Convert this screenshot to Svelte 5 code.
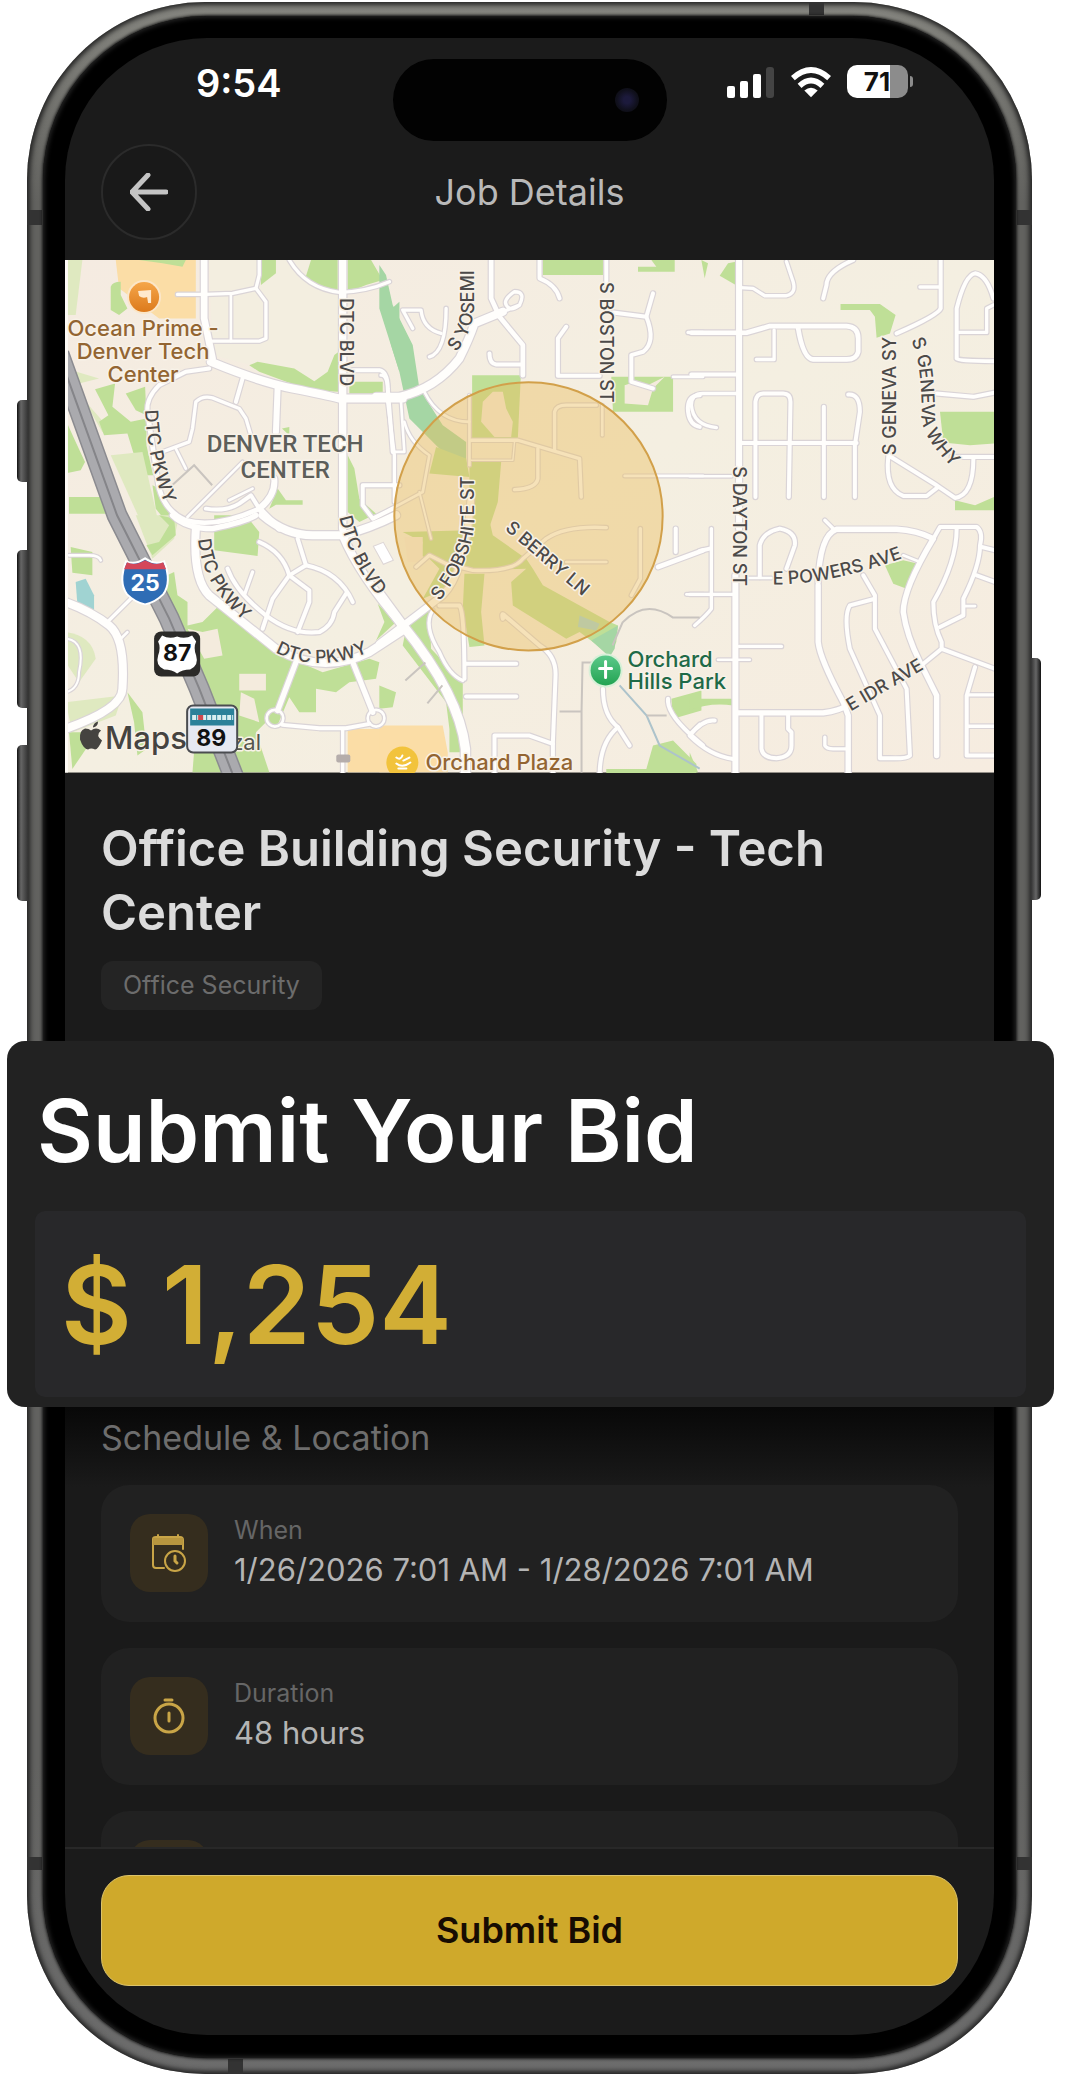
<script>
	let bid = $state('1,254');

	const job = {
		title: 'Office Building Security - Tech Center',
		category: 'Office Security'
	};

	const details = [
		{ icon: 'calendar', label: 'When', value: '1/26/2026 7:01 AM - 1/28/2026 7:01 AM' },
		{ icon: 'timer', label: 'Duration', value: '48 hours' },
		{ icon: 'none', label: '', value: '' }
	];

	const green = '#bfdf97';
	const pale = '#dfe9c0';
	const sand = '#f4ebdd';
	const orange = '#fbdda6';
	const teal = '#a5d6a4';
	const water = '#a0d3d2';

	// map tiles, each drawn at three units per pixel
	// areas: [fill, path], roads: [width, path]
	const tiles = [
		{
			x: -6,
			y: -5,
			areas: [
				[pale, 'M18 15H70L50 180H18z'],
				['#f3eee0', 'M450 15H840V400L460 300z'],
				[orange, 'M170 15H410V190H300L180 100z'],
				[green, 'M240 15H380L370 35 310 25z'],
				[green, 'M155 95Q160 80 185 80V120L205 160 180 180 155 165z'],
				[green, 'M605 15H650V55L605 90z'],
				[green, 'M755 15H835V112L775 100 738 70z'],
				[green, 'M865 15H935L970 75 920 90 865 112z'],
				[teal, 'M1020 140L975 180 995 270 1020 350z'],
				[green, 'M570 330L595 320 705 340 765 378 805 350 825 300 838 290V410L750 405 600 350z'],
				[green, 'M870 380H970V415H870z'],
				[pale, 'M20 340L120 370 60 385 80 440 150 520 130 530z'],
				[green, 'M108 402L168 385 160 455 215 500 262 490V570L282 660H258L225 600 205 535 135 540 120 500 148 480z'],
				[green, 'M200 415L258 395 262 480 230 465z'],
				[green, 'M18 490L50 560 78 620 65 645 18 655z'],
				[green, 'M30 725H135L165 775H30z'],
				[pale, 'M155 600L250 590 300 810H250z'],
				[green, 'M280 690L300 700 350 790 330 810 290 760z'],
				[green, 'M668 520L690 515V540z'],
				[green, 'M630 760L655 700 680 735H730V748H650z'],
				[green, 'M865 600L885 640 900 730 950 775 900 800 865 770z']
			],
			roads: [
				[20, 'M435 15V190L460 310'],
				[24, 'M455 320Q600 380 700 400T840 430H1030'],
				[22, 'M850 15V820'],
				[10, 'M690 15Q740 100 840 112Q920 110 990 80'],
				[10, 'M355 118H440L520 115 590 100'],
				[10, 'M600 15V60L590 100 620 140V250L600 258H460'],
				[8, 'M515 120V258'],
				[12, 'M550 370L530 440'],
				[18, 'M655 400L650 530'],
				[12, 'M450 340L380 350 300 390Q260 430 265 470'],
				[14, 'M265 470Q290 640 300 700Q320 770 380 795Q470 820 600 760'],
				[18, 'M645 670Q650 720 600 760L660 820'],
				[8, 'M385 785L550 620'],
				[10, 'M310 590L390 560 400 520 410 440Q430 420 460 428L540 460 560 490 575 540'],
				[8, 'M350 580L380 640'],
				[12, 'M440 760Q500 770 540 745L575 720 600 760'],
				[8, 'M510 735L580 700'],
				[12, 'M880 345H960Q985 350 985 400L1000 590'],
				[12, 'M1020 690H910V750L940 790L1000 760']
			]
		},
		{
			x: 314,
			y: -5,
			areas: [
				[teal, 'M0 30L20 60 40 150 100 270 120 400 190 510 260 560V630L200 600 90 490 60 350 0 160z'],
				[green, 'M170 575L260 610 270 665 150 655z'],
				[green, 'M490 15H670V60H490z'],
				[green, 'M815 15H885V50H775V35H830z'],
				[green, 'M278 360H424L415 548H278z'],
				[sand, 'M310 440L340 410H370L380 460 400 500 395 545H345L305 500z'],
				[green, 'M695 365H880V470H700z'],
				[sand, 'M735 390Q775 375 795 395L855 365 820 400 805 450 735 445z'],
				[green, 'M270 620H365L355 740 330 815H270z']
			],
			roads: [
				[24, 'M-10 425H60Q170 400 240 310Q270 250 285 205L370 170'],
				[10, 'M370 170L420 150Q440 110 405 110Q360 140 390 160Q400 165 420 150'],
				[14, 'M335 15V130L360 185 430 270V360'],
				[12, 'M330 295Q330 325 350 328H430'],
				[12, 'M480 15V70Q530 90 540 130'],
				[12, 'M680 15V90'],
				[12, 'M560 215L535 250V362H660'],
				[12, 'M700 172L800 185 820 115'],
				[12, 'M800 185Q830 260 790 290L755 300V380L820 400'],
				[8, 'M880 365H970'],
				[10, 'M925 232H970'],
				[12, 'M960 420Q920 420 925 470Q930 510 960 515'],
				[10, 'M100 220L70 165H125Q130 220 185 235'],
				[10, 'M200 160Q200 290 150 305'],
				[8, 'M135 410Q180 500 270 500'],
				[8, 'M270 420V630'],
				[10, 'M275 555H415L600 610 605 725'],
				[10, 'M525 585V470Q530 450 560 450H650'],
				[10, 'M475 580V670Q470 700 405 703'],
				[8, 'M668 450V540'],
				[8, 'M735 662H970'],
				[10, 'M5 360Q30 360 25 440L45 600V740'],
				[8, 'M65 440L75 590H45'],
				[8, 'M75 500Q90 560 150 600L130 710 0 780'],
				[8, 'M-20 690H30'],
				[6, 'M120 710L155 850'],
				[4, 'M275 615H400L405 560']
			]
		},
		{
			x: 624,
			y: -5,
			areas: [
				[green, 'M35 15L55 25 45 70z'],
				[green, 'M138 20V90L90 62 115 25z'],
				[green, 'M452 147H570L617 180 600 235 560 248 555 185 540 165H452z'],
				[green, 'M750 470H912V565L840 570 760 562z'],
				[green, 'M795 735L855 750 912 725V765H795z']
			],
			roads: [
				[18, 'M148 15V820'],
				[14, 'M5 233H170L240 213H470Q505 215 505 250V290Q500 313 470 313H370Q340 310 325 220'],
				[10, 'M253 225V313H200'],
				[12, 'M5 358H140'],
				[10, 'M140 415H40Q5 415 5 450Q10 510 80 517'],
				[10, 'M152 98L190 100 225 122H290Q320 115 310 80L290 20'],
				[12, 'M490 15Q410 50 410 90L400 130'],
				[12, 'M752 15V160Q745 180 620 235'],
				[10, 'M690 96H750'],
				[12, 'M910 130Q890 60 855 55Q825 60 800 160V310Q805 318 915 318'],
				[10, 'M805 232H890V160L910 150'],
				[12, 'M740 415L850 425 915 412'],
				[12, 'M152 563H500'],
				[12, 'M197 725V440Q200 415 220 415H280Q302 415 302 440L297 725'],
				[12, 'M402 455V725'],
				[12, 'M475 418Q510 415 510 470L495 570V725'],
				[8, 'M0 663H125'],
				[12, 'M595 600L740 690 795 728Q850 720 850 610'],
				[12, 'M595 605Q585 700 640 722H710L745 695'],
				[12, 'M785 605H915']
			]
		},
		{
			x: -6,
			y: 255,
			areas: [
				[pale, 'M230 0H360L345 70 280 130z'],
				[green, 'M300 0L345 10 350 60 280 120 262 90 300 80 330 30z'],
				[green, 'M465 0H560L600 50 595 122 465 105z'],
				[green, 'M35 95L100 110V180L40 172z'],
				[water, 'M50 200L80 190 105 240V285L55 265z'],
				[green, 'M280 200L345 170 355 240 385 260V330L430 320 480 270 560 330 650 410 790 470 930 430 960 440 950 490 870 500 830 530 770 520V590H720L690 545 650 640 620 620 590 650 630 770H520L440 590 330 300z'],
				[sand, 'M540 475H620V525H540z'],
				[sand, 'M430 350L475 340 490 420 435 430 385 340z'],
				[sand, 'M545 530L585 550 600 620 540 600z'],
				[green, 'M205 530L250 590 262 700 235 720 225 620z'],
				[green, 'M405 705H480L510 770H400z'],
				[green, 'M955 265L1010 320 950 375 975 320z'],
				[pale, 'M20 560L190 540 170 600 40 650z'],
				[pale, 'M20 350Q100 360 110 430L60 500 20 440z'],
				[green, 'M30 650H115L40 760z'],
				[orange, 'M865 640H1025V770H865z']
			],
			roads: [
				[16, 'M340 0Q380 40 460 40Q560 20 590 0'],
				[24, 'M610 0Q680 60 760 60H850Q930 40 1010 0'],
				[24, 'M410 40Q400 190 450 240L550 320 650 400Q790 480 930 410L1030 345'],
				[24, 'M850 60Q900 180 1030 330'],
				[12, 'M600 80Q670 110 690 180L750 225V260L715 350'],
				[12, 'M715 70L740 150L690 180L640 250 610 340'],
				[12, 'M740 150Q840 170 880 260'],
				[12, 'M505 160Q530 230 620 300Q700 360 780 350Q820 330 825 290L860 235'],
				[10, 'M580 170L555 240'],
				[16, 'M710 440L655 585'],
				[16, 'M880 440L940 590'],
				[8, 'M622 608a25 25 0 1 0 50 0a25 25 0 1 0-50 0'],
				[8, 'M925 608a25 25 0 1 0 50 0a25 25 0 1 0-50 0'],
				[12, 'M670 628L780 638H860L930 625'],
				[10, 'M850 640V770'],
				[24, 'M20 260Q100 290 150 330Q200 370 190 520Q190 580 20 640'],
				[10, 'M150 315L215 250'],
				[8, 'M185 370L205 350'],
				[8, 'M30 120H90Q120 120 125 135'],
				[6, 'M25 370Q80 380 60 470Q60 520 20 530']
			]
		},
		{
			x: 314,
			y: 255,
			areas: [
				[green, 'M270 -5H325L340 60 440 130 460 160 490 210 690 320 715 330 710 380 690 420 640 380 600 350 560 370 400 270 395 200 440 160 240 165 200 220 130 250 180 160 150 130 120 120 130 80 70 50 270 45z'],
				[sand, 'M75 65H130V140H85z'],
				[green, 'M255 175H315L305 290 315 390 270 395 250 280z'],
				[water, 'M600 300L660 325 650 345 595 335z'],
				[teal, 'M635 375L715 330 705 400 690 425z'],
				[green, 'M80 340L150 280 155 400 250 500V710H210V640L200 560 70 390z'],
				[green, 'M0 510L50 530 40 575 0 580z'],
				[green, 'M875 550L965 525V585L880 610z'],
				[green, 'M820 690L880 675 950 745V775H680V760H800z'],
				[orange, 'M0 630H190L205 710V770H0z']
			],
			roads: [
				[28, 'M0 235L70 330Q240 540 258 700V780'],
				[20, 'M0 385L190 240Q260 170 275 -60'],
				[10, 'M110 155L150 120 200 145 280 165Q400 170 430 130L500 70Q560 30 680 37'],
				[8, 'M560 140H680'],
				[10, 'M782 40V190L755 240'],
				[14, 'M835 155L970 105'],
				[12, 'M888 40V110'],
				[8, 'M920 237H970'],
				[12, 'M180 270H240Q255 290 255 490'],
				[10, 'M160 285Q130 330 180 410Q210 480 250 495'],
				[12, 'M260 445H410'],
				[12, 'M260 543H410'],
				[12, 'M370 310Q365 290 375 300L480 390Q530 420 528 480L520 680V780'],
				[12, 'M345 780V660H450L520 685'],
				[12, 'M670 520Q670 600 715 635L750 690'],
				[12, 'M715 635Q660 680 660 780'],
				[12, 'M865 550Q860 590 930 655L970 690'],
				[8, 'M930 655L960 625']
			]
		},
		{
			x: 624,
			y: 255,
			areas: [
				[green, 'M585 150L640 135 685 145 650 220 610 205z'],
				[green, 'M0 550H130V570Q60 560 0 585z'],
				[green, 'M0 710L25 770H0z']
			],
			roads: [
				[18, 'M137 180V780'],
				[10, 'M65 40V280Q50 300 15 330'],
				[12, 'M30 107L60 100'],
				[10, 'M0 237H130'],
				[12, 'M210 185V90Q220 50 270 40Q320 50 315 90L290 160'],
				[8, 'M170 188H245'],
				[16, 'M385 210V380Q390 430 460 560L475 600V780'],
				[16, 'M385 200Q390 60 440 42H620Q680 45 730 70'],
				[10, 'M405 15L435 45'],
				[8, 'M640 120L690 140'],
				[12, 'M520 180L555 240V340L650 520 660 720Q650 730 600 728H570V600L480 400Q460 300 480 270L555 250'],
				[16, 'M730 70Q640 220 640 290Q650 360 690 440L740 540V720'],
				[12, 'M730 70L750 35H860Q880 50 870 90Q870 150 820 250V300L750 335'],
				[12, 'M875 95L915 105'],
				[12, 'M860 180L915 200'],
				[8, 'M820 272H855'],
				[12, 'M800 40Q800 140 730 260Q730 330 755 380V400L700 445'],
				[12, 'M755 400L915 460'],
				[12, 'M855 455L830 540V720H915'],
				[10, 'M835 538H915'],
				[10, 'M835 632H915'],
				[16, 'M145 592H400Q450 585 470 570'],
				[12, 'M215 600V700Q220 728 260 728Q305 725 305 690V650L295 640V600'],
				[10, 'M405 665V690Q410 700 430 700H470'],
				[10, 'M148 393H275'],
				[8, 'M85 433H180'],
				[12, 'M75 615Q40 610 0 660Q60 720 130 730']
			]
		}
	];

	const streets = [
		{ name: 'DTC BLVD', d: 'M275 38V150' },
		{ name: 'S YOSEMI', d: 'M391 92Q409 70 409 40V-20' },
		{ name: 'S BOSTON ST', d: 'M534 22V170' },
		{ name: 'DTC PKWY', d: 'M80 150Q82 205 108 265' },
		{ name: 'DTC PKWY', d: 'M133 279Q137 332 196 374' },
		{ name: 'DTC PKWY', d: 'M210 392Q258 417 322 383' },
		{ name: 'DTC BLVD', d: 'M274 257Q286 312 331 356' },
		{ name: 'S FOBSHITE ST', d: 'M374 341Q407 300 409 260V180' },
		{ name: 'S BERRY LN', d: 'M439 269L545 360' },
		{ name: 'S DAYTON ST', d: 'M667 206V355' },
		{ name: 'S GENEVA SY', d: 'M830 195V45' },
		{ name: 'S GENEVA WHY', d: 'M845 80Q856 100 856 160Q860 185 900 220' },
		{ name: 'E POWERS AVE', d: 'M707 324Q770 325 860 289' },
		{ name: 'E IDR AVE', d: 'M785 451L890 390' }
	];
</script>

<main class="stage">
	<div class="phone">
		<span class="key action"></span>
		<span class="key volume-up"></span>
		<span class="key volume-down"></span>
		<span class="key power"></span>
		<span class="band top"></span>
		<span class="band left"></span>
		<span class="band right"></span>
		<span class="band left low"></span>
		<span class="band right low"></span>
		<span class="band bottom"></span>

		<div class="bezel">
			<div class="screen">
				<div class="status">
					<span class="time">9:54</span>
					<span class="island"><span class="camera"></span></span>
					<div class="indicators">
						<svg width="48" height="32" viewBox="0 0 48 32" aria-hidden="true">
							<rect x="0" y="20" width="8" height="12" rx="2" fill="#fff" />
							<rect x="13" y="15" width="8" height="17" rx="2" fill="#fff" />
							<rect x="26" y="8" width="8" height="24" rx="2" fill="#fff" />
							<rect x="39" y="1" width="8" height="31" rx="3" fill="#444" />
						</svg>
						<svg width="40" height="32" viewBox="0 0 42 32" aria-hidden="true">
							<g fill="none" stroke="#fff" stroke-width="6">
								<path d="M2 12Q21-5 40 12" />
								<path d="M9 20Q21 9 33 20" />
							</g>
							<path d="M14 25Q21 19 28 25L21 32z" fill="#fff" />
						</svg>
						<span class="battery"><span>71</span></span>
					</div>
				</div>

				<header>
					<button class="back" aria-label="Back">
						<svg width="38" height="38" viewBox="0 0 38 38" aria-hidden="true">
							<path d="M36 19H2M18 2L2 19L18 36" fill="none" stroke="#c4c4c4" stroke-width="5" stroke-linecap="round" stroke-linejoin="round" />
						</svg>
					</button>
					<h1>Job Details</h1>
				</header>

				<svg class="map" viewBox="0 0 928 512" role="img" aria-label="Map of the job area">
					<defs>
						<linearGradient id="land" x1="0" y1="0" x2="1" y2="1">
							<stop offset="0" stop-color="#f5ebe1" />
							<stop offset="0.5" stop-color="#f4efe1" />
							<stop offset="1" stop-color="#f6ece0" />
						</linearGradient>
						<linearGradient id="pin" x1="0" y1="0" x2="0" y2="1">
							<stop offset="0" stop-color="#f5a64a" />
							<stop offset="1" stop-color="#dc7a1c" />
						</linearGradient>
						<linearGradient id="park" x1="0" y1="0" x2="0" y2="1">
							<stop offset="0" stop-color="#5cc98a" />
							<stop offset="1" stop-color="#22a352" />
						</linearGradient>
					</defs>
					<rect width="928" height="512" fill="url(#land)" />

					{#each tiles as tile}
						<g transform="translate({tile.x} {tile.y}) scale(0.3334)">
							{#each tile.areas as [fill, d]}
								<path {d} {fill} />
							{/each}
						</g>
					{/each}
					{#each tiles as tile}
						<g class="casing" transform="translate({tile.x} {tile.y}) scale(0.3334)">
							{#each tile.roads as [width, d]}
								<path {d} stroke-width={width + 7} />
							{/each}
						</g>
					{/each}
					{#each tiles as tile}
						<g class="road" transform="translate({tile.x} {tile.y}) scale(0.3334)">
							{#each tile.roads as [width, d]}
								<path {d} stroke-width={width} />
							{/each}
						</g>
					{/each}

					<!-- trails and creek -->
					<g fill="none" stroke="#c9c4bf" stroke-width="2">
						<path d="M634 357H607Q580 338 557 362L547 385M494 451H516L517 402H527M516 451V512" />
						<path d="M107 225L129 205L147 225M340 420L360 402M362 443L377 425" />
					</g>
					<path d="M554 425L581 455L594 485L634 508" fill="none" stroke="#adc3cb" stroke-width="2" />
					<path d="M581 455H601" fill="none" stroke="#c9c4bf" stroke-width="2" />
					<path d="M308 286L318 282L328 300L318 304z" fill="#fff" stroke="#ddd6d6" />
					<rect x="271" y="494" width="14" height="8" rx="2" fill="#b5adab" />

					<!-- interstate -->
					<g fill="none">
						<path d="M-6 94L52 255L104 358L134 428L170 520" stroke="#8b8b90" stroke-width="21" />
						<path d="M-6 94L52 255L104 358L134 428L170 520" stroke="#aaaaae" stroke-width="18" />
						<path d="M-6 94L52 255L104 358L134 428L170 520" stroke="#858589" stroke-width="2" />
					</g>
					<path d="M0 0H3V512H0z" fill="#fdfaf5" />

					<circle cx="463" cy="256" r="134" fill="#e9bd5c" fill-opacity="0.42" stroke="#d2a04a" stroke-width="2" />

					{#each streets as street, i}
						<path id="street-{i}" d={street.d} fill="none" />
						<text class="street"><textPath href="#street-{i}">{street.name}</textPath></text>
					{/each}

					<g class="district" text-anchor="middle">
						<text x="220" y="192">DENVER TECH</text>
						<text x="220" y="218">CENTER</text>
					</g>

					<circle cx="79" cy="37" r="17" fill="#fbe6c8" />
					<circle cx="79" cy="37" r="15" fill="url(#pin)" />
					<path d="M73 31L86 30V43H83L82 37Q78 39 74 36z" fill="#ffe9cd" />
					<g class="place brown" text-anchor="middle">
						<text x="78" y="76">Ocean Prime -</text>
						<text x="78" y="99">Denver Tech</text>
						<text x="78" y="122">Center</text>
					</g>

					<circle cx="540" cy="410" r="17" fill="#d8f0d8" />
					<circle cx="540" cy="410" r="15" fill="url(#park)" />
					<path d="M540 401V417M534 408H546" stroke="#fff" stroke-width="3" stroke-linecap="round" />
					<g class="place green">
						<text x="562" y="407">Orchard</text>
						<text x="562" y="429">Hills Park</text>
					</g>

					<circle cx="337" cy="502" r="16" fill="#f2c33c" />
					<path d="M331 497Q335 500 337 495M331 503Q337 508 345 502M333 508H341M338 500L344 497" fill="none" stroke="#fff" stroke-width="2" stroke-linecap="round" />
					<g class="place brown">
						<text x="360" y="509">Orchard Plaza</text>
					</g>

					<path d="M61 301Q70 305 80 298Q90 305 99 301Q107 322 98 334Q90 342 80 344Q70 342 62 334Q53 322 61 301z" fill="#2f6db5" stroke="#fff" stroke-width="2" />
					<path d="M62 302Q70 306 80 300Q90 306 98 302L101 309H59z" fill="#d4475a" />
					<text class="shield white" x="80" y="331">25</text>

					<rect x="89" y="371" width="46" height="45" rx="7" fill="#2b2a28" />
					<path d="M97 375Q104 379 112 376Q120 379 127 375L131 381Q128 387 131 395Q134 405 125 409Q117 409 112 413Q107 409 99 409Q90 405 93 395Q96 387 93 381z" fill="#fff" />
					<text class="shield" x="112" y="401">87</text>

					<g class="brand">
						<path d="M28 466Q29 462 33 461Q33 466 28 467zM26 470Q31 466 36 470Q30 475 37 480Q33 489 30 489Q26 487 23 489Q18 488 15 479Q14 470 20 468Q24 468 26 470z" />
						<text x="40" y="488">Maps</text>
					</g>
					<text class="legal" x="166" y="489">zal</text>

					<rect x="122" y="445" width="50" height="47" rx="6" fill="#e6e9f2" stroke="#4a4c50" stroke-width="2" />
					<path d="M125 448H169V465H125z" fill="#2b8199" />
					<path d="M127 457H168" stroke="#d7eef0" stroke-width="5" stroke-dasharray="4 1" />
					<path d="M133 457H138" stroke="#d0484e" stroke-width="5" />
					<text class="shield" x="146" y="485">89</text>
				</svg>

				<section class="summary">
					<h2>{job.title}</h2>
					<span class="tag">{job.category}</span>
				</section>

				<section class="bid">
					<label for="bid">Submit Your Bid</label>
					<div class="amount">
						<span>$</span>
						<input id="bid" type="text" inputmode="numeric" bind:value={bid} />
					</div>
				</section>

				<section class="details">
					<h3>Schedule &amp; Location</h3>
					{#each details as item}
						<div class="card">
							<span class="icon">
								{#if item.icon === 'calendar'}
									<svg width="34" height="38" viewBox="0 0 34 38" aria-hidden="true">
										<g fill="none" stroke="#c9a547" stroke-width="2" stroke-linecap="round">
											<path d="M12 34H4Q1 34 1 31V5Q1 3 4 3H28Q31 3 31 6V15" />
											<path d="M6 1V4M26 1V4" />
											<circle cx="23" cy="27" r="10" />
											<path d="M23 22V27L25 29" stroke-width="3" />
										</g>
										<path d="M1 4H31V11H1z" fill="#b8963f" />
									</svg>
								{:else if item.icon === 'timer'}
									<svg width="34" height="38" viewBox="0 0 34 38" aria-hidden="true">
										<g fill="none" stroke="#c9a547" stroke-linecap="round">
											<path d="M13 3H20" stroke-width="3" />
											<circle cx="17" cy="21" r="14" stroke-width="3" />
											<path d="M17 16V24" stroke-width="3" />
										</g>
									</svg>
								{/if}
							</span>
							<div class="text">
								<span class="label">{item.label}</span>
								<span class="value">{item.value}</span>
							</div>
						</div>
					{/each}
				</section>

				<footer>
					<button class="submit">Submit Bid</button>
				</footer>
			</div>
		</div>
	</div>
</main>

<style>
	:global(body) {
		background: #fff;
	}
	.stage {
		padding: 2px 18px 6px 6px;
		font-family: Inter, 'Liberation Sans', sans-serif;
	}
	.phone {
		position: relative;
		margin: 0 22px 0 21px;
		padding: 14px 16px 16px;
		border-radius: 178px;
		background: linear-gradient(#85857f, #62625f 200px, #626260 85%, #6c6c6c);
		box-shadow: inset 0 0 5px 3px #242424;
	}
	.bezel {
		position: relative;
		padding: 22px 22px 23px;
		border-radius: 164px;
		background: #000;
		box-shadow: 0 0 3px 1px #161616, inset 0 0 5px 1px #2c2c2c;
	}
	.screen {
		border-radius: 142px;
		background: #1b1b1b;
	}
	.key {
		position: absolute;
		left: -10px;
		width: 11px;
		border-radius: 5px 0 0 5px;
		background: linear-gradient(90deg, #111, #666 4px, #333);
	}
	.action {
		top: 398px;
		height: 82px;
	}
	.volume-up {
		top: 548px;
		height: 158px;
	}
	.volume-down {
		top: 743px;
		height: 156px;
	}
	.power {
		top: 656px;
		right: -9px;
		left: auto;
		width: 10px;
		height: 242px;
		border-radius: 0 5px 5px 0;
		background: linear-gradient(90deg, #333, #666 5px, #111);
	}
	.band {
		position: absolute;
		width: 15px;
		height: 15px;
		background: #333;
	}
	.band.top {
		top: 0;
		right: 208px;
		height: 13px;
	}
	.band.bottom {
		bottom: 0;
		left: 201px;
	}
	.band.left {
		top: 208px;
		left: 0;
	}
	.band.right {
		top: 208px;
		right: 0;
	}
	.band.low {
		top: auto;
		bottom: 204px;
		height: 13px;
	}

	.status {
		display: grid;
		grid-template-columns: 1fr 274px 1fr;
		align-items: start;
		padding-top: 21px;
	}
	.time {
		padding-left: 20px;
		text-align: center;
		color: #fff;
		font-size: 38px;
		font-weight: 600;
		line-height: 48px;
	}
	.island {
		display: flex;
		align-items: center;
		justify-content: flex-end;
		height: 82px;
		padding-right: 28px;
		box-sizing: border-box;
		border-radius: 41px;
		background: #020202;
	}
	.camera {
		width: 24px;
		height: 24px;
		border-radius: 50%;
		background: radial-gradient(#1c1a3c 20%, #10101c 60%, #0a0a0c);
	}
	.indicators {
		display: flex;
		align-items: center;
		gap: 16px;
		padding: 6px 0 0 60px;
	}
	.battery {
		position: relative;
		width: 61px;
		border-radius: 10px;
		background: linear-gradient(90deg, #fff 71%, #8c8c8c 71%);
		color: #111;
		font-size: 26px;
		font-weight: 700;
		line-height: 33px;
		text-align: center;
	}
	.battery::after {
		content: '';
		position: absolute;
		top: 11px;
		right: -5px;
		width: 3px;
		height: 11px;
		border-radius: 0 3px 3px 0;
		background: #8c8c8c;
	}

	header {
		display: grid;
		grid-template-columns: 96px 1fr 96px;
		align-items: center;
		padding: 3px 36px 20px;
	}
	.back {
		display: grid;
		place-items: center;
		width: 96px;
		height: 96px;
		padding: 0;
		border: 2px solid #2b2b2b;
		border-radius: 50%;
		background: #191919;
	}
	h1 {
		margin: 0;
		text-align: center;
		color: #b9b9b9;
		font-size: 36px;
		font-weight: 400;
	}

	.map {
		display: block;
		width: 100%;
		height: auto;
		overflow: hidden;
	}
	.casing,
	.road {
		fill: none;
		stroke: #dad4d7;
		stroke-linecap: round;
		stroke-linejoin: round;
	}
	.road {
		stroke: #fffefc;
	}
	.map text {
		paint-order: stroke;
		stroke: #f8f2e8;
		stroke-width: 3px;
		stroke-linejoin: round;
	}
	.street {
		fill: #4c4a49;
		font-size: 18px;
		font-weight: 500;
	}
	.map .district {
		fill: #5d5e5a;
		font-family: Roboto, sans-serif;
		font-size: 24px;
		font-weight: 500;
	}
	.place {
		font-size: 22px;
		font-weight: 500;
	}
	.brown {
		fill: #936532;
	}
	.green {
		fill: #1f6a47;
	}
	.map .shield {
		fill: #111;
		stroke: none;
		font-size: 23px;
		font-weight: 700;
		text-anchor: middle;
	}
	.map .shield.white {
		fill: #fff;
	}
	.brand {
		fill: #454340;
		font-size: 31px;
		font-weight: 500;
	}
	.legal {
		fill: #55564c;
		font-size: 22px;
	}

	.summary {
		padding: 44px 36px 31px;
	}
	h2 {
		margin: 0 0 16px;
		color: #dcdcdc;
		font-size: 49px;
		font-weight: 600;
		line-height: 64px;
	}
	.tag {
		display: block;
		width: fit-content;
		padding: 0 22px;
		border-radius: 12px;
		background: #242424;
		color: #6c6c6c;
		font-size: 25px;
		line-height: 49px;
	}

	.bid {
		position: relative;
		margin: 0 -60px 0 -58px;
		padding: 38px 28px 10px;
		border-radius: 18px;
		background: #222;
	}
	.bid label {
		display: block;
		padding-left: 2px;
		color: #fff;
		font-size: 86px;
		font-weight: 600;
		line-height: 104px;
	}
	.amount {
		display: flex;
		align-items: center;
		gap: 30px;
		margin-top: 28px;
		padding: 0 26px;
		border-radius: 10px;
		background: #28282a;
		color: #d2ae35;
		font-size: 109px;
		font-weight: 600;
		line-height: 186px;
	}
	.amount input {
		flex: 1;
		min-width: 0;
		height: 186px;
		padding: 0;
		border: 0;
		outline: 0;
		background: none;
		color: inherit;
		font: inherit;
	}

	.details {
		display: flex;
		flex-direction: column;
		gap: 26px;
		height: 440px;
		box-sizing: border-box;
		padding: 10px 36px 0;
		overflow: hidden;
		background: linear-gradient(#080808, #1a1a1a 80px);
	}
	h3 {
		margin: 0;
		color: #6d6d6d;
		font-size: 34px;
		font-weight: 400;
		line-height: 42px;
	}
	.card {
		display: flex;
		flex: none;
		align-items: center;
		gap: 26px;
		height: 137px;
		box-sizing: border-box;
		padding: 0 29px;
		border-radius: 28px;
		background: #212121;
	}
	.icon {
		display: grid;
		flex: none;
		place-items: center;
		width: 78px;
		height: 78px;
		border-radius: 20px;
		background: #352d1e;
	}
	.text {
		display: flex;
		flex-direction: column;
		padding-bottom: 4px;
	}
	.label {
		color: #666;
		font-size: 25px;
		line-height: 38px;
	}
	.value {
		color: #b4b4b4;
		font-size: 31px;
		line-height: 42px;
	}

	footer {
		padding: 26px 36px 49px;
		border-top: 2px solid #282828;
	}
	.submit {
		display: block;
		width: 100%;
		height: 111px;
		border: 1px solid #dcc36a;
		border-radius: 28px;
		background: #cfa92b;
		color: #170c02;
		font-family: inherit;
		font-size: 36px;
		font-weight: 600;
	}
</style>
